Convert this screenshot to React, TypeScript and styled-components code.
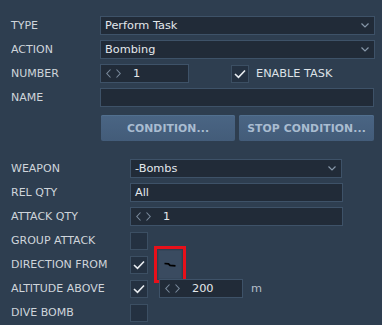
import styled, { createGlobalStyle } from 'styled-components';

const GlobalStyle = createGlobalStyle`
  html, body {
    margin: 0;
    padding: 0;
    background: #2e3e50;
  }
  * {
    box-sizing: border-box;
  }
`;

const Page = styled.div`
  width: 382px;
  height: 325px;
  overflow: hidden;
  background: #2e3e50;
  font-family: 'DejaVu Sans', Verdana, sans-serif;
  padding: 16px 0 0 11px;
`;

const Section = styled.div`
  display: flex;
  flex-direction: column;
  gap: 5px;
`;

const Row = styled.div`
  display: flex;
  align-items: center;
  height: 19px;
`;

const Label = styled.div<{ width: number }>`
  width: ${(p) => p.width}px;
  flex: none;
  font-size: 11px;
  color: #cfd5db;
  white-space: nowrap;
`;

const Field = styled.div<{ width: number; left?: number }>`
  width: ${(p) => p.width}px;
  height: 19px;
  flex: none;
  margin-left: ${(p) => p.left ?? 0}px;
  display: flex;
  align-items: center;
  padding: 0 5px 0 4px;
  background: #212b38;
  border: 1px solid #3e5268;
  font-size: 11.3px;
  color: #e4e8ec;
  white-space: nowrap;
`;

const FieldText = styled.span`
  flex: 1;
`;

const Spin = styled.span`
  display: flex;
  align-items: center;
  gap: 5px;
  margin-right: 12px;
  margin-left: 1px;
`;

const Check = styled.div<{ left?: number }>`
  width: 18px;
  height: 18px;
  flex: none;
  margin-left: ${(p) => p.left ?? 0}px;
  background: #243141;
  border: 1px solid #3c4f63;
  display: flex;
  align-items: center;
  justify-content: center;
`;

const CheckText = styled.span`
  margin-left: 7px;
  font-size: 11.3px;
  color: #dde2e7;
`;

const ButtonRow = styled.div`
  display: flex;
  gap: 4px;
  margin: 8px 0 18px 90px;
`;

const Button = styled.button<{ width: number }>`
  width: ${(p) => p.width}px;
  height: 26px;
  border: none;
  border-radius: 2px;
  background: linear-gradient(#4a6584, #435c79);
  box-shadow: inset 0 1px 0 #52708f;
  color: #a9bcd0;
  font-family: 'DejaVu Sans', Verdana, sans-serif;
  font-weight: bold;
  font-size: 10.8px;
  letter-spacing: 0.1px;
  padding: 0;
`;

const Highlight = styled.div`
  flex: none;
  margin-left: 6px;
  width: 32px;
  height: 37px;
  border: 3px solid #e8101a;
  padding: 1px;
`;

const Dial = styled.div`
  width: 100%;
  height: 100%;
  background: #3a4b60;
  border: 1px solid #35465a;
  display: flex;
  align-items: center;
  justify-content: center;
`;

const Unit = styled.span`
  margin-left: 8px;
  font-size: 11.3px;
  color: #b4bec8;
`;

const ChevronDown = () => (
  <svg width="8" height="5" viewBox="0 0 8 5">
    <path d="M0.5 0.5 L4 4 L7.5 0.5" fill="none" stroke="#8797a9" strokeWidth="1.2" />
  </svg>
);

const Arrows = () => (
  <Spin>
    <svg width="5" height="9" viewBox="0 0 5 9">
      <path d="M4.5 0.5 L0.8 4.5 L4.5 8.5" fill="none" stroke="#7b8b9d" strokeWidth="1.1" />
    </svg>
    <svg width="5" height="9" viewBox="0 0 5 9">
      <path d="M0.5 0.5 L4.2 4.5 L0.5 8.5" fill="none" stroke="#7b8b9d" strokeWidth="1.1" />
    </svg>
  </Spin>
);

const Tick = () => (
  <svg width="12" height="10" viewBox="0 0 12 10">
    <path d="M1 5 L4.5 8.3 L11 1.5" fill="none" stroke="#e8ecf0" strokeWidth="1.6" />
  </svg>
);

const Select = ({ width, value }: { width: number; value: string }) => (
  <Field width={width}>
    <FieldText>{value}</FieldText>
    <ChevronDown />
  </Field>
);

const NumberField = ({ width, value, left }: { width: number; value: string; left?: number }) => (
  <Field width={width} left={left}>
    <Arrows />
    <FieldText>{value}</FieldText>
  </Field>
);

export default function App() {
  return (
    <Page>
      <GlobalStyle />
      <Section>
        <Row>
          <Label width={89}>TYPE</Label>
          <Select width={275} value="Perform Task" />
        </Row>
        <Row>
          <Label width={89}>ACTION</Label>
          <Select width={275} value="Bombing" />
        </Row>
        <Row>
          <Label width={89}>NUMBER</Label>
          <NumberField width={89} value="1" />
          <Check left={42}>
            <Tick />
          </Check>
          <CheckText>ENABLE TASK</CheckText>
        </Row>
        <Row>
          <Label width={89}>NAME</Label>
          <Field width={274} />
        </Row>
      </Section>

      <ButtonRow>
        <Button width={134}>CONDITION...</Button>
        <Button width={135}>STOP CONDITION...</Button>
      </ButtonRow>

      <Section>
        <Row>
          <Label width={119}>WEAPON</Label>
          <Select width={212} value="-Bombs" />
        </Row>
        <Row>
          <Label width={119}>REL QTY</Label>
          <Field width={213}>All</Field>
        </Row>
        <Row>
          <Label width={119}>ATTACK QTY</Label>
          <NumberField width={213} value="1" />
        </Row>
        <Row>
          <Label width={119}>GROUP ATTACK</Label>
          <Check />
        </Row>
        <Row>
          <Label width={119}>DIRECTION FROM</Label>
          <Check>
            <Tick />
          </Check>
          <Highlight>
            <Dial>
              <svg width="12" height="6" viewBox="0 0 12 6">
                <path d="M0.5 1.5 L4.5 1.8 L6 3.4 L11.5 3.9" fill="none" stroke="#000" strokeWidth="1.7" />
              </svg>
            </Dial>
          </Highlight>
        </Row>
        <Row>
          <Label width={119}>ALTITUDE ABOVE</Label>
          <Check>
            <Tick />
          </Check>
          <NumberField width={84} value="200" left={11} />
          <Unit>m</Unit>
        </Row>
        <Row>
          <Label width={119}>DIVE BOMB</Label>
          <Check />
        </Row>
      </Section>
    </Page>
  );
}
